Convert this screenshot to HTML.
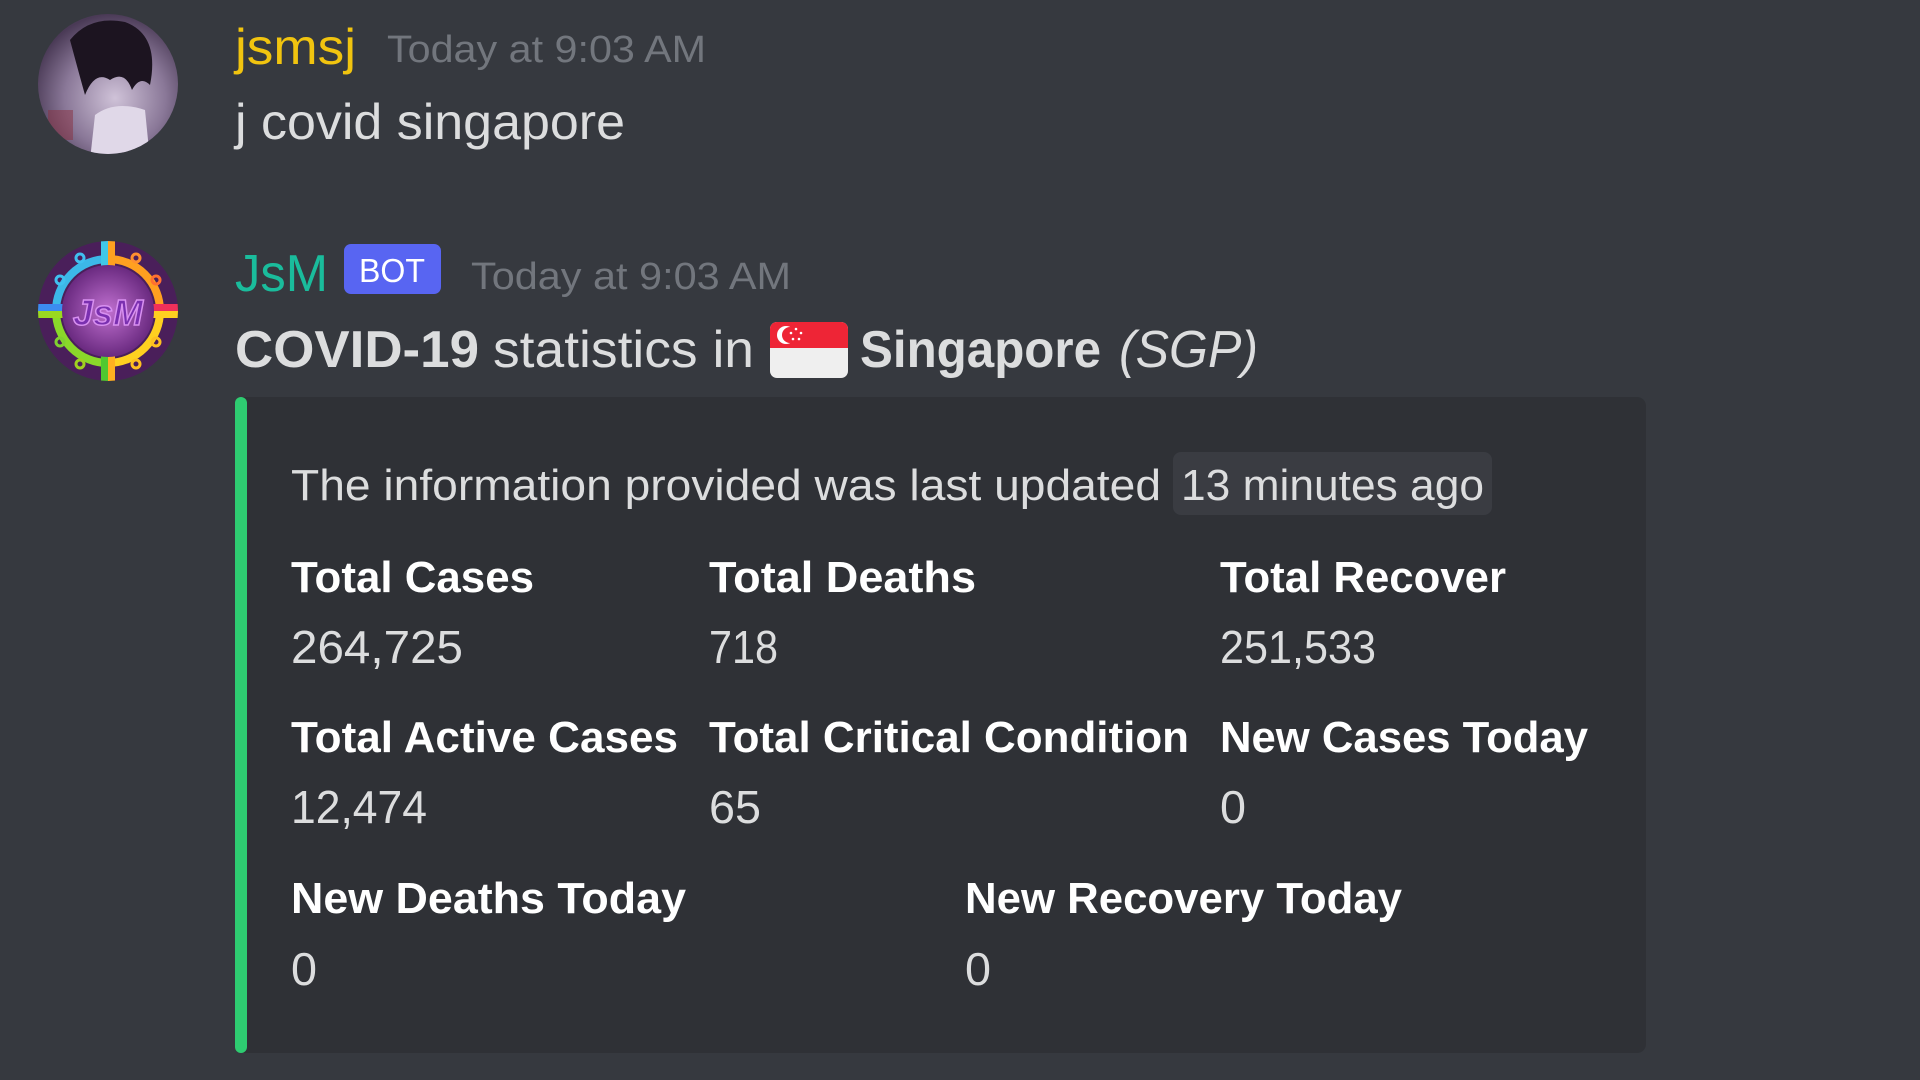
<!DOCTYPE html>
<html><head><meta charset="utf-8"><style>
html,body{margin:0;padding:0;background:#36393f;width:1920px;height:1080px;overflow:hidden}
svg{display:block}
text{font-family:"Liberation Sans",sans-serif}
</style></head><body>
<svg width="1920" height="1080" viewBox="0 0 1920 1080" xmlns="http://www.w3.org/2000/svg">
<defs>
<radialGradient id="av1" cx="55%" cy="60%" r="60%"><stop offset="0" stop-color="#cfc2d8"/><stop offset="0.6" stop-color="#8a7898"/><stop offset="1" stop-color="#4a3a56"/></radialGradient>
<radialGradient id="av2c" cx="50%" cy="50%" r="50%"><stop offset="0" stop-color="#c070d0"/><stop offset="1" stop-color="#6a2a80"/></radialGradient>
<clipPath id="c1"><circle cx="108" cy="84" r="70"/></clipPath>
<clipPath id="c2"><circle cx="108" cy="311" r="70"/></clipPath>
</defs>
<!-- avatar 1 -->
<g clip-path="url(#c1)">
<rect x="38" y="14" width="140" height="140" fill="url(#av1)"/>
<path d="M70 40 Q90 15 125 22 Q160 35 150 85 Q140 75 132 90 Q125 70 110 80 Q95 70 85 95 Q78 70 70 40 Z" fill="#1c1420"/>
<path d="M95 115 Q115 100 145 110 L150 160 L90 160 Z" fill="#e0d8e8"/>
<rect x="48" y="110" width="25" height="30" fill="#8a3040" opacity="0.5"/>
</g>
<!-- avatar 2 -->
<g clip-path="url(#c2)">
<circle cx="108" cy="311" r="70" fill="#4a1f5a"/>
<circle cx="108" cy="311" r="52" fill="none" stroke="#3cb8e8" stroke-width="8" stroke-dasharray="81.7 245" transform="rotate(180 108 311)"/>
<circle cx="108" cy="311" r="52" fill="none" stroke="#ffa020" stroke-width="8" stroke-dasharray="81.7 245" transform="rotate(270 108 311)"/>
<circle cx="108" cy="311" r="52" fill="none" stroke="#ffd020" stroke-width="8" stroke-dasharray="81.7 245" transform="rotate(0 108 311)"/>
<circle cx="108" cy="311" r="52" fill="none" stroke="#8ad82a" stroke-width="8" stroke-dasharray="81.7 245" transform="rotate(90 108 311)"/>
<rect x="38" y="304" width="45" height="7" fill="#3c8cf0"/><rect x="133" y="304" width="45" height="7" fill="#f0305a"/>
<rect x="38" y="311" width="45" height="7" fill="#9ad820"/><rect x="133" y="311" width="45" height="7" fill="#ffd020"/>
<rect x="101" y="240" width="7" height="45" fill="#40c8e8"/><rect x="108" y="240" width="7" height="45" fill="#ffa020"/>
<rect x="101" y="337" width="7" height="45" fill="#50c830"/><rect x="108" y="337" width="7" height="45" fill="#ffb020"/>
<circle cx="108" cy="311" r="46" fill="url(#av2c)"/>
<g fill="none" stroke-width="3"><circle cx="60" cy="280" r="4" stroke="#40c0f0"/><circle cx="156" cy="280" r="4" stroke="#ff7030"/><circle cx="60" cy="342" r="4" stroke="#80d030"/><circle cx="156" cy="342" r="4" stroke="#ffc020"/><circle cx="80" cy="258" r="4" stroke="#40c0f0"/><circle cx="136" cy="258" r="4" stroke="#ff9030"/><circle cx="80" cy="364" r="4" stroke="#a0d020"/><circle cx="136" cy="364" r="4" stroke="#ffc020"/></g>
</g>
<text x="108" y="325" font-size="36" font-weight="bold" font-style="italic" fill="#7a30b0" stroke="#d890f0" stroke-width="1.5" text-anchor="middle">JsM</text>

<!-- message 1 -->
<text x="235" y="64" font-size="50" fill="#f1c40f" textLength="121" lengthAdjust="spacingAndGlyphs">jsmsj</text>
<text x="387" y="62" font-size="38" fill="#72767d" textLength="319" lengthAdjust="spacingAndGlyphs">Today at 9:03 AM</text>
<text x="235" y="139" font-size="50" fill="#dcddde" textLength="390" lengthAdjust="spacingAndGlyphs">j covid singapore</text>

<!-- message 2 -->
<text x="235" y="291" font-size="52" fill="#1abc9c" textLength="93" lengthAdjust="spacingAndGlyphs">JsM</text>
<rect x="344" y="244" width="97" height="50" rx="7" fill="#5865f2"/>
<text x="392" y="282" font-size="33" fill="#fff" text-anchor="middle" textLength="66" lengthAdjust="spacingAndGlyphs">BOT</text>
<text x="471" y="289" font-size="38" fill="#72767d" textLength="320" lengthAdjust="spacingAndGlyphs">Today at 9:03 AM</text>

<text x="235" y="367" font-size="52" font-weight="bold" fill="#dcddde" textLength="244" lengthAdjust="spacingAndGlyphs">COVID-19</text>
<text x="493" y="367" font-size="52" fill="#dcddde" textLength="261" lengthAdjust="spacingAndGlyphs">statistics in</text>
<rect x="770" y="322" width="78" height="56" rx="7" fill="#efefef"/>
<path d="M770 348 V329 a7 7 0 0 1 7 -7 H841 a7 7 0 0 1 7 7 V348 Z" fill="#ee2536"/>
<circle cx="786" cy="335" r="9" fill="#fff"/><circle cx="790" cy="335" r="8" fill="#ee2536"/>
<g fill="#fff"><circle cx="796" cy="329" r="1.3"/><circle cx="801" cy="333" r="1.3"/><circle cx="791" cy="333" r="1.3"/><circle cx="799" cy="339" r="1.3"/><circle cx="793" cy="339" r="1.3"/></g>
<text x="860" y="367" font-size="52" font-weight="bold" fill="#dcddde" textLength="241" lengthAdjust="spacingAndGlyphs">Singapore</text>
<text x="1119" y="367" font-size="52" font-style="italic" fill="#dcddde" textLength="139" lengthAdjust="spacingAndGlyphs">(SGP)</text>

<!-- embed -->
<rect x="235" y="397" width="1411" height="656" rx="9" fill="#2f3136"/>
<rect x="235" y="397" width="12" height="656" rx="6" fill="#2ecc71"/>
<rect x="1173" y="452" width="319" height="63" rx="8" fill="#3a3c42"/>
<g font-size="44" fill="#dcddde">
<text x="291" y="500" textLength="870" lengthAdjust="spacingAndGlyphs">The information provided was last updated</text>
<text x="1181" y="500" textLength="303" lengthAdjust="spacingAndGlyphs">13 minutes ago</text>
</g>
<g font-size="44" font-weight="bold" fill="#ffffff">
<text x="291" y="592" textLength="243" lengthAdjust="spacingAndGlyphs">Total Cases</text>
<text x="709" y="592" textLength="267" lengthAdjust="spacingAndGlyphs">Total Deaths</text>
<text x="1220" y="592" textLength="286" lengthAdjust="spacingAndGlyphs">Total Recover</text>
<text x="291" y="752" textLength="387" lengthAdjust="spacingAndGlyphs">Total Active Cases</text>
<text x="709" y="752" textLength="480" lengthAdjust="spacingAndGlyphs">Total Critical Condition</text>
<text x="1220" y="752" textLength="368" lengthAdjust="spacingAndGlyphs">New Cases Today</text>
<text x="291" y="913" textLength="395" lengthAdjust="spacingAndGlyphs">New Deaths Today</text>
<text x="965" y="913" textLength="437" lengthAdjust="spacingAndGlyphs">New Recovery Today</text>
</g>
<g font-size="46" fill="#dcddde">
<text x="291" y="663" textLength="172" lengthAdjust="spacingAndGlyphs">264,725</text>
<text x="709" y="663" textLength="69" lengthAdjust="spacingAndGlyphs">718</text>
<text x="1220" y="663" textLength="156" lengthAdjust="spacingAndGlyphs">251,533</text>
<text x="291" y="823" textLength="136" lengthAdjust="spacingAndGlyphs">12,474</text>
<text x="709" y="823" textLength="52" lengthAdjust="spacingAndGlyphs">65</text>
<text x="1220" y="823" textLength="26" lengthAdjust="spacingAndGlyphs">0</text>
<text x="291" y="985" textLength="26" lengthAdjust="spacingAndGlyphs">0</text>
<text x="965" y="985" textLength="26" lengthAdjust="spacingAndGlyphs">0</text>
</g>
</svg>
</body></html>
